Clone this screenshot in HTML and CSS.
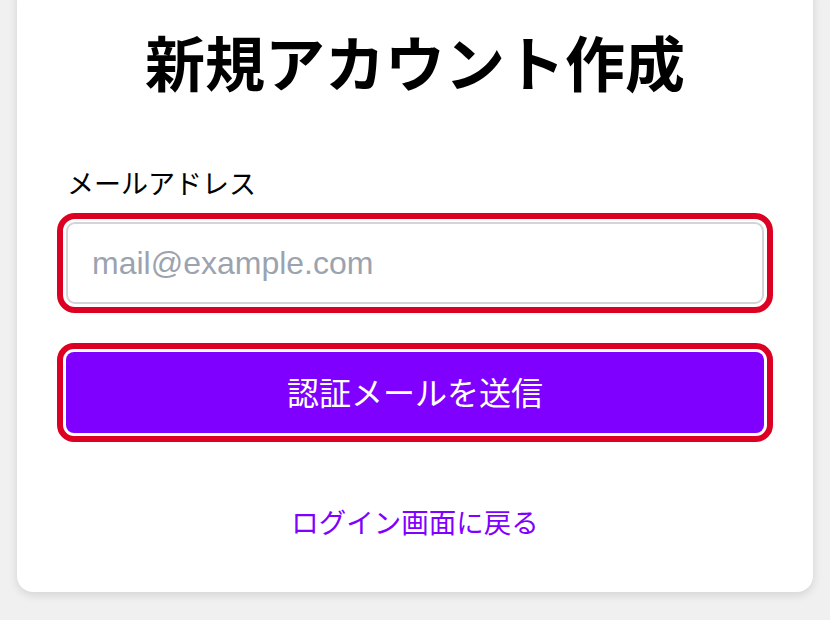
FILE: index.html
```html
<!DOCTYPE html>
<html lang="ja">
<head>
<meta charset="utf-8">
<title>新規アカウント作成</title>
<link rel="stylesheet" href="styles.css">
</head>
<body>
<main class="card">
  <h1 class="title">新規アカウント作成</h1>
  <form class="form">
    <label class="label" for="email">メールアドレス</label>
    <input class="input highlighted" id="email" type="email" placeholder="mail@example.com">
    <button class="button highlighted" type="button">認証メールを送信</button>
  </form>
  <a class="back-link" href="#">ログイン画面に戻る</a>
</main>
</body>
</html>
```

FILE: styles.css
```css
html, body {
  margin: 0;
  padding: 0;
  background: #f0f0f0;
  height: 100%;
  overflow: hidden;
}

body {
  font-family: "Noto Sans CJK JP", "Noto Sans", sans-serif;
  color: #000;
}

.card {
  margin: -20px 17px 0;
  background: #fff;
  border-radius: 16px;
  box-shadow: 0 3px 10px rgba(0, 0, 0, 0.12);
  padding: 45px 49px 51px;
  display: flex;
  flex-direction: column;
}

.title {
  margin: 0;
  font-size: 60px;
  line-height: 72px;
  font-weight: 700;
  text-align: center;
}

.form {
  display: flex;
  flex-direction: column;
  margin-top: 66px;
}

.label {
  font-size: 27px;
  line-height: 40px;
  padding-left: 1px;
}

.input {
  margin-top: 19px;
  height: 82px;
  box-sizing: border-box;
  border: 2px solid #d4d4d8;
  border-radius: 9px;
  padding: 0 24px;
  font-family: "Liberation Sans", Arial, sans-serif;
  font-size: 32px;
  color: #111;
  background: #fff;
}

.input::placeholder {
  color: #9ca3af;
}

.highlighted {
  outline: 6px solid #dc0022;
  outline-offset: 3px;
}

.button {
  margin-top: 48px;
  height: 81px;
  border: none;
  border-radius: 8px;
  background: #7f00ff;
  color: #fff;
  font-family: "Noto Sans CJK JP", "Noto Sans", sans-serif;
  font-size: 32px;
  line-height: 1;
  padding: 0 0 4px;
  cursor: pointer;
}

.back-link {
  margin-top: 68px;
  align-self: center;
  font-size: 27.5px;
  line-height: 40px;
  color: #7f00ff;
  text-decoration: none;
}
```
